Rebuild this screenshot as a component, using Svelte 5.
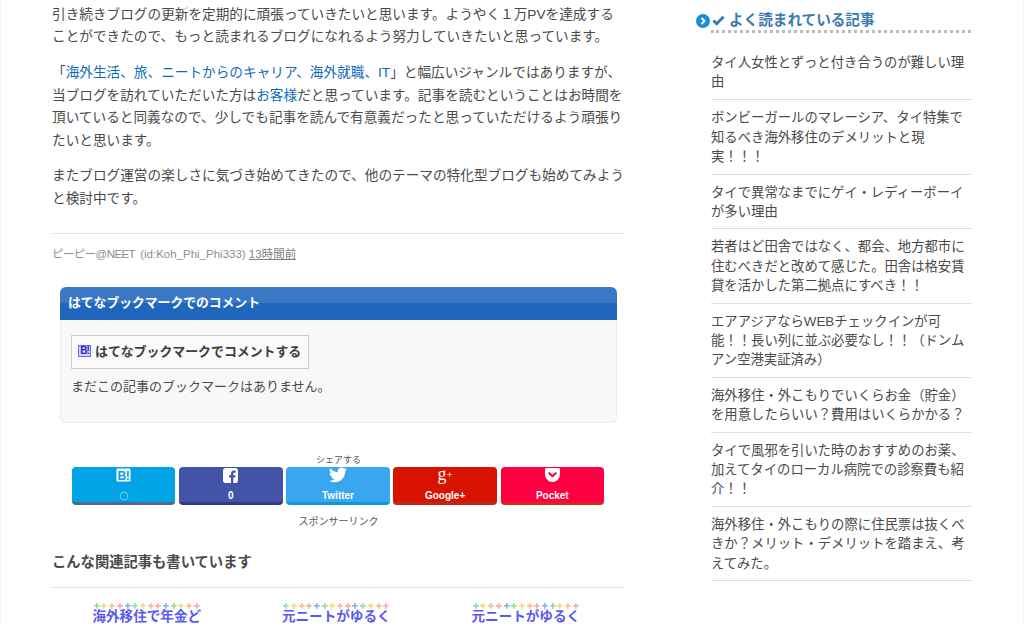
<script>
  const posts = [
    'タイ人女性とずっと付き合うのが難しい理由',
    'ボンビーガールのマレーシア、タイ特集で知るべき海外移住のデメリットと現実！！！',
    'タイで異常なまでにゲイ・レディーボーイが多い理由',
    '若者はど田舎ではなく、都会、地方都市に住むべきだと改めて感じた。田舎は格安賃貸を活かした第二拠点にすべき！！',
    'エアアジアならWEBチェックインが可能！！長い列に並ぶ必要なし！！（ドンムアン空港実証済み）',
    '海外移住・外こもりでいくらお金（貯金）を用意したらいい？費用はいくらかかる？',
    'タイで風邪を引いた時のおすすめのお薬、加えてタイのローカル病院での診察費も紹介！！',
    '海外移住・外こもりの際に住民票は抜くべきか？メリット・デメリットを踏まえ、考えてみた。'
  ];
  const related = ['海外移住で年金ど', '元ニートがゆるく', '元ニートがゆるく'];
  const plusColors = ['#8fdc9c', '#f5d878', '#fbb98a', '#f8a8a8', '#7fb4e8', '#8fdc9c', '#f5d878', '#fbb98a', '#f8a8a8', '#7fb4e8', '#8fdc9c', '#f5d878', '#fbb98a', '#f8a8a8'];
</script>

<div class="page">
  <main class="main">
    <p>引き続きブログの更新を定期的に頑張っていきたいと思います。ようやく１万PVを達成することができたので、もっと読まれるブログになれるよう努力していきたいと思っています。</p>
    <p>「<a href="#a">海外生活、旅、ニートからのキャリア、海外就職、IT</a>」と幅広いジャンルではありますが、当ブログを訪れていただいた方は<a href="#a">お客様</a>だと思っています。記事を読むということはお時間を頂いていると同義なので、少しでも記事を読んで有意義だったと思っていただけるよう頑張りたいと思います。</p>
    <p>またブログ運営の楽しさに気づき始めてきたので、他のテーマの特化型ブログも始めてみようと検討中です。</p>

    <div class="meta"><span class="name">ピーピー@NEET</span> <span class="id">(id:Koh_Phi_Phi333)</span> <span class="time">13時間前</span></div>

    <section class="hatena">
      <h3>はてなブックマークでのコメント</h3>
      <div class="hatena-body">
        <div class="hb-btn"><span class="fav">B!</span>はてなブックマークでコメントする</div>
        <div class="none">まだこの記事のブックマークはありません。</div>
      </div>
    </section>

    <div class="share-label">シェアする</div>
    <div class="share">
      <div class="sbtn hb">
        <svg class="ico" viewBox="0 0 16 16" width="15" height="15"><rect x="0.500" y="0.500" width="15" height="14" rx="1.500" fill="#fff"/><text x="8" y="12.500" text-anchor="middle" font-size="13" font-weight="700" letter-spacing="-0.500" font-family="Liberation Sans" fill="#00a4e6">B!</text></svg>
        <svg class="lbl-ico" viewBox="0 0 10 10" width="10" height="10"><circle cx="5" cy="5" r="3.800" fill="none" stroke="#fff" stroke-width="1" stroke-dasharray="1 1"/></svg>
      </div>
      <div class="sbtn fb">
        <svg class="ico" viewBox="0 0 16 16" width="15" height="15"><rect width="16" height="16" rx="3" fill="#fff"/><path d="M11 16V10h2l.4-2.400H11V6.200c0-.8.3-1.200 1.200-1.200h1.200V2.800C13 2.700 12.300 2.700 11.600 2.700 9.800 2.700 8.500 3.800 8.500 5.900v1.700H6.500V10h2v6z" fill="#4353a8"/></svg>
        <span>0</span>
      </div>
      <div class="sbtn tw">
        <svg class="ico bird" viewBox="0 0 24 24" width="18" height="18"><path fill="#fff" d="M23.953 4.57a10 10 0 01-2.825.775 4.958 4.958 0 002.163-2.723c-.951.555-2.005.959-3.127 1.184a4.92 4.92 0 00-8.384 4.482C7.69 8.095 4.067 6.13 1.64 3.162a4.822 4.822 0 00-.666 2.475c0 1.71.87 3.213 2.188 4.096a4.904 4.904 0 01-2.228-.616v.06a4.923 4.923 0 003.946 4.827 4.996 4.996 0 01-2.212.085 4.936 4.936 0 004.604 3.417 9.867 9.867 0 01-6.102 2.105c-.39 0-.779-.023-1.17-.067a13.995 13.995 0 007.557 2.209c9.053 0 13.998-7.496 13.998-13.985 0-.21 0-.42-.015-.63A9.935 9.935 0 0024 4.59z"/></svg>
        <span>Twitter</span>
      </div>
      <div class="sbtn gp">
        <span class="gplus">g<small>+</small></span>
        <span>Google+</span>
      </div>
      <div class="sbtn po">
        <svg class="ico" viewBox="0 0 16 15" width="15" height="14"><path fill="#fff" d="M1.500 0h13A1.500 1.500 0 0 1 16 1.500V7a8 8 0 0 1-16 0V1.500A1.500 1.500 0 0 1 1.500 0z"/><path d="M4.500 5.500 8 8.800l3.500-3.300" fill="none" stroke="#ff0042" stroke-width="2.200" stroke-linecap="round" stroke-linejoin="round"/></svg>
        <span>Pocket</span>
      </div>
    </div>

    <div class="sponsor">スポンサーリンク</div>

    <h3 class="rel-title">こんな関連記事も書いています</h3>
    <div class="related">
      {#each related as r}
        <div class="rel">
          <div class="pluses">
            {#each plusColors as c}<svg viewBox="0 0 8 8" width="7.700" height="7.700"><path d="M4 1v6M1 4h6" stroke={c} stroke-width="1.600"/></svg>{/each}
          </div>
          <div class="rel-text">{r}</div>
        </div>
      {/each}
    </div>
  </main>

  <aside class="side">
    <h3 class="side-title">
      <svg class="bullet" viewBox="0 0 14 14" width="14" height="14"><circle cx="7" cy="7" r="7" fill="#1b8fd6"/><path d="M5.500 4 8.500 7l-3 3" fill="none" stroke="#fff" stroke-width="2"/></svg>
      <svg class="check" viewBox="0 0 14 12" width="13" height="11"><path d="M1.500 6 5 9.500 12.500 2" fill="none" stroke="#3a7ab0" stroke-width="3.200"/></svg>
      よく読まれている記事
    </h3>
    <ul>
      {#each posts as p}<li>{p}</li>{/each}
    </ul>
  </aside>
</div>

<style>
  :global(body) { margin: 0; background: #fff; overflow: hidden; }
  .page {
    box-sizing: border-box;
    width: 1024px;
    height: 624px;
    overflow: hidden;
    display: flex;
    gap: 86px;
    padding: 4px 0 0 51px;
    border-left: 1px solid #f4f4f4;
    border-right: 1px solid #f4f4f4;
    font-family: "Liberation Sans", "Noto Sans CJK JP", sans-serif;
    color: #4a4a4a;
    font-size: 13.650px;
  }
  .main { width: 573px; flex: none; }
  p { margin: 0 0 13.500px; line-height: 22.400px; }
  a { color: #0d6bbf; text-decoration: none; }
  .meta {
    margin-top: 22.500px;
    border-top: 1px solid #e3e3e3;
    padding-top: 11px;
    font-size: 11.500px;
    line-height: 18px;
    color: #8e8e8e;
  }
  .name { letter-spacing: -0.600px; }
  .id { margin-left: 2px; }
  .time { color: #808080; text-decoration: underline; }
  .hatena {
    margin: 24px 8px 0;
    border-radius: 6px;
    border: 1px solid #eee;
    border-top: 0;
    background: #f8f8f8;
    height: 136px;
    box-sizing: border-box;
  }
  .hatena h3 {
    margin: 0 -1px;
    height: 33px;
    line-height: 32px;
    padding-left: 8px;
    font-size: 12.800px;
    font-weight: 700;
    color: #fff;
    border-radius: 6px 6px 0 0;
    background: linear-gradient(#3a78c6 0 50%, #2066bc 50% 100%);
  }
  .hatena-body { padding: 15px 10px 0; }
  .hb-btn {
    display: inline-flex;
    align-items: center;
    height: 30px;
    padding: 0 7px 2px 6px;
    background: #fafafa;
    border: 1px solid #ccc;
    font-weight: 700;
    font-size: 12.900px;
    color: #3d3d3d;
  }
  .fav {
    width: 13px;
    height: 12px;
    margin-right: 4px;
    background: #d5d5ff;
    border: 1px solid #6a6ae0;
    box-sizing: border-box;
    color: #2b2bb8;
    font-size: 10px;
    line-height: 10px;
    letter-spacing: -1px;
    text-align: center;
    font-weight: 700;
    overflow: hidden;
  }
  .none { margin-top: 8px; line-height: 20px; font-size: 13px; }
  .share-label {
    margin-top: 30px;
    text-align: center;
    width: 573px;
    font-size: 9px;
    line-height: 14px;
    color: #555;
  }
  .share {
    display: flex;
    gap: 3.700px;
    margin: 0 21px 0 20px;
  }
  .sbtn {
    flex: 1;
    height: 38px;
    box-sizing: border-box;
    border-radius: 4px;
    border-bottom: 3px solid;
    color: #fff;
    font-size: 10px;
    font-weight: 700;
    position: relative;
    display: flex;
    flex-direction: column;
    align-items: center;
  }
  .sbtn span:last-child { position: absolute; top: 23px; line-height: 12px; }
  .ico { position: absolute; top: 1px; }
  .bird { top: -1px; }
  .lbl-ico { position: absolute; top: 24px; }
  .hb { background: #00a4e6; border-color: #4f6b8a; }
  .fb { background: #4353a8; border-color: #2f3c80; }
  .tw { background: #38a7f0; border-color: #1098d8; }
  .gp { background: #d81300; border-color: #b82a1a; }
  .po { background: #ff0042; border-color: #d8261a; }
  .sbtn .gplus {
    position: absolute;
    top: -2px;
    font-family: "Liberation Serif", serif;
    font-size: 18px;
    font-weight: 400;
    line-height: 18px;
  }
  .gplus small { font-size: 11px; vertical-align: 2px; }
  .sponsor {
    margin-top: 9px;
    width: 573px;
    text-align: center;
    font-size: 10px;
    line-height: 16px;
    color: #555;
  }
  .rel-title {
    margin: 22px 0 0;
    padding-bottom: 15px;
    border-bottom: 1px solid #e3e3e3;
    font-size: 14.300px;
    line-height: 20px;
    font-weight: 700;
  }
  .related {
    display: grid;
    grid-template-columns: repeat(3, 189.500px);
    margin-top: 14px;
  }
  .rel { display: flex; flex-direction: column; align-items: center; }
  .pluses { display: flex; width: 108px; height: 7px; }
  .pluses svg { flex: none; }
  .rel-text {
    font-size: 13.600px;
    line-height: 16px;
    font-weight: 700;
    color: #5a5af0;
    white-space: nowrap;
  }
  .side { width: 260px; flex: none; font-size: 13.350px; }
  .side-title {
    position: relative;
    margin: 3px 0 0;
    padding: 0 0 0 18px;
    height: 23px;
    line-height: 27px;
    border-bottom: 3px dotted #bbb;
    font-size: 14.600px;
    font-weight: 700;
    color: #3a7ab0;
  }
  .bullet { position: absolute; left: -15px; top: 6.500px; }
  .check { position: absolute; left: 1px; top: 8px; }
  ul { list-style: none; margin: 0; padding: 12px 0 0; }
  li {
    line-height: 19.400px;
    padding: 8px 0 7px;
    border-bottom: 1px solid #ddd;
    color: #4a4a4a;
  }
  li:first-child { padding-bottom: 7.500px; }
</style>
